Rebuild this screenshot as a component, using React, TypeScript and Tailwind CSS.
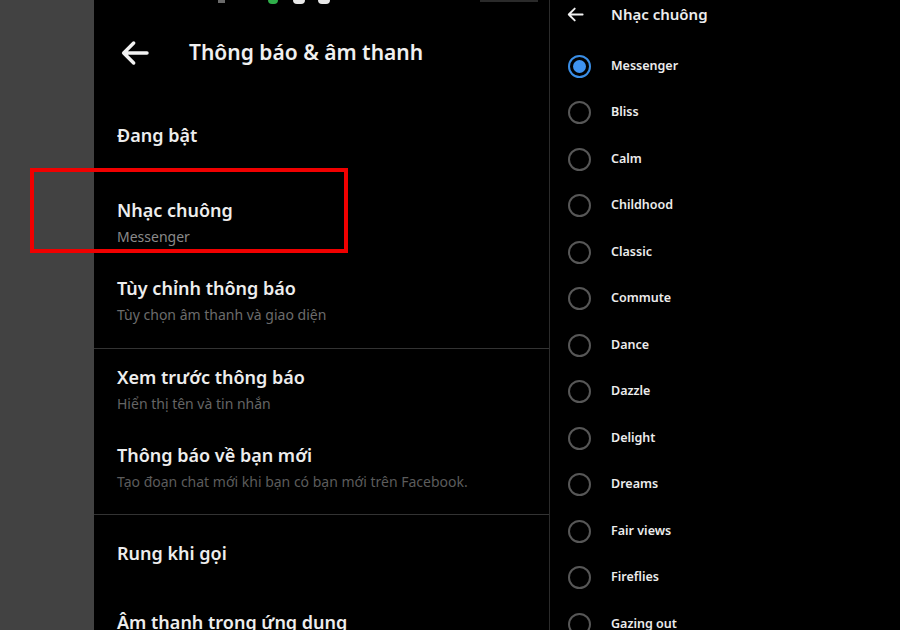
import React from "react"

const FONT = { fontFamily: '"Noto Sans", "DejaVu Sans", sans-serif' }

const RINGTONES = [
  "Messenger",
  "Bliss",
  "Calm",
  "Childhood",
  "Classic",
  "Commute",
  "Dance",
  "Dazzle",
  "Delight",
  "Dreams",
  "Fair views",
  "Fireflies",
  "Gazing out",
]

const BackArrow: React.FC<{ size: number; stroke: number }> = ({ size, stroke }) => (
  <svg width={size} height={size} viewBox="0 0 24 24" fill="none">
    <path
      d="M21 12H3.5M11 4.5L3.5 12l7.5 7.5"
      stroke="#f2f2f2"
      strokeWidth={stroke}
      strokeLinecap="round"
      strokeLinejoin="round"
    />
  </svg>
)

const SettingItem: React.FC<{ title: string; subtitle: string; subColor?: string }> = ({
  title,
  subtitle,
  subColor = "text-[#6c6c6c]",
}) => (
  <div className="flex flex-col">
    <span className="text-[18px] font-semibold leading-[28px] text-[#ededed]">{title}</span>
    <span className={"text-[14px] leading-[26px] " + subColor}>{subtitle}</span>
  </div>
)

const Radio: React.FC<{ checked?: boolean }> = ({ checked }) =>
  checked ? (
    <div className="flex h-[23px] w-[23px] shrink-0 items-center justify-center rounded-full border-2 border-[#3a8ee6]">
      <div className="h-[13px] w-[13px] rounded-full bg-[#3f93f0]" />
    </div>
  ) : (
    <div className="h-[23px] w-[23px] shrink-0 rounded-full border-2 border-[#575757]" />
  )

export default function App() {
  return (
    <div className="relative flex h-[630px] w-[900px] overflow-hidden bg-black" style={FONT}>
      {/* side gutter */}
      <div className="w-[94px] shrink-0 bg-[#424242]" />

      {/* notification settings */}
      <div className="w-[455px] shrink-0 bg-black">
        <div className="flex h-[4px] items-start">
          <div className="ml-[124px] h-[3px] w-[7px] bg-[#6a6a6a]" />
          <div className="ml-[43px] h-[4px] w-[10px] rounded-b-sm bg-[#2fae4a]" />
          <div className="ml-[15px] h-[4px] w-[12px] rounded-b-sm bg-[#e8e8e8]" />
          <div className="ml-[13px] h-[4px] w-[12px] rounded-b-sm bg-[#e8e8e8]" />
          <div className="ml-[150px] h-[2px] w-[58px] bg-[#2a2a2a]" />
        </div>
        <div className="flex h-[98px] items-center pl-[25px]">
          <BackArrow size={32} stroke={2.6} />
          <span className="ml-[38px] text-[21px] font-semibold text-[#f0f0f0]">Thông báo &amp; âm thanh</span>
        </div>

        <div className="flex h-[66px] items-center pl-[23px]">
          <span className="text-[18px] font-semibold text-[#ededed]">Đang bật</span>
        </div>

        <div className="flex flex-col gap-[24px] pl-[23px] pt-[28px]">
          <SettingItem title="Nhạc chuông" subtitle="Messenger" subColor="text-[#8a8a8a]" />
          <SettingItem title="Tùy chỉnh thông báo" subtitle="Tùy chọn âm thanh và giao diện" />
        </div>

        <div className="mt-[20px] h-px bg-[#333333]" />

        <div className="mt-[14px] flex flex-col gap-[24px] pl-[23px]">
          <SettingItem title="Xem trước thông báo" subtitle="Hiển thị tên và tin nhắn" subColor="text-[#656565]" />
          <SettingItem
            title="Thông báo về bạn mới"
            subtitle="Tạo đoạn chat mới khi bạn có bạn mới trên Facebook."
            subColor="text-[#5c5c5c]"
          />
        </div>

        <div className="mt-[19px] h-px bg-[#333333]" />

        <div className="flex flex-col pl-[23px]">
          <span className="mt-[24px] text-[18px] font-semibold leading-[28px] text-[#ededed]">Rung khi gọi</span>
          <span className="mt-[41px] text-[18px] font-semibold leading-[28px] text-[#ededed]">
            Âm thanh trong ứng dụng
          </span>
        </div>
      </div>

      {/* ringtone picker */}
      <div className="flex-1 border-l border-[#2b2b2b] bg-black">
        <div className="flex h-[28px] items-center pl-[16px]">
          <BackArrow size={19} stroke={2.4} />
          <span className="ml-[26px] text-[15px] font-semibold text-[#ededed]">Nhạc chuông</span>
        </div>
        <div className="pt-[14.75px]">
          {RINGTONES.map((name, i) => (
            <div key={name} className="flex h-[46.5px] items-center pl-[18px]">
              <Radio checked={i === 0} />
              <span className="ml-[20px] text-[12.5px] font-semibold text-[#ececec]">{name}</span>
            </div>
          ))}
        </div>
      </div>

      {/* highlight frame */}
      <div className="absolute left-[30px] top-[168px] h-[85px] w-[318px] border-4 border-[#f00000]" />
    </div>
  )
}
